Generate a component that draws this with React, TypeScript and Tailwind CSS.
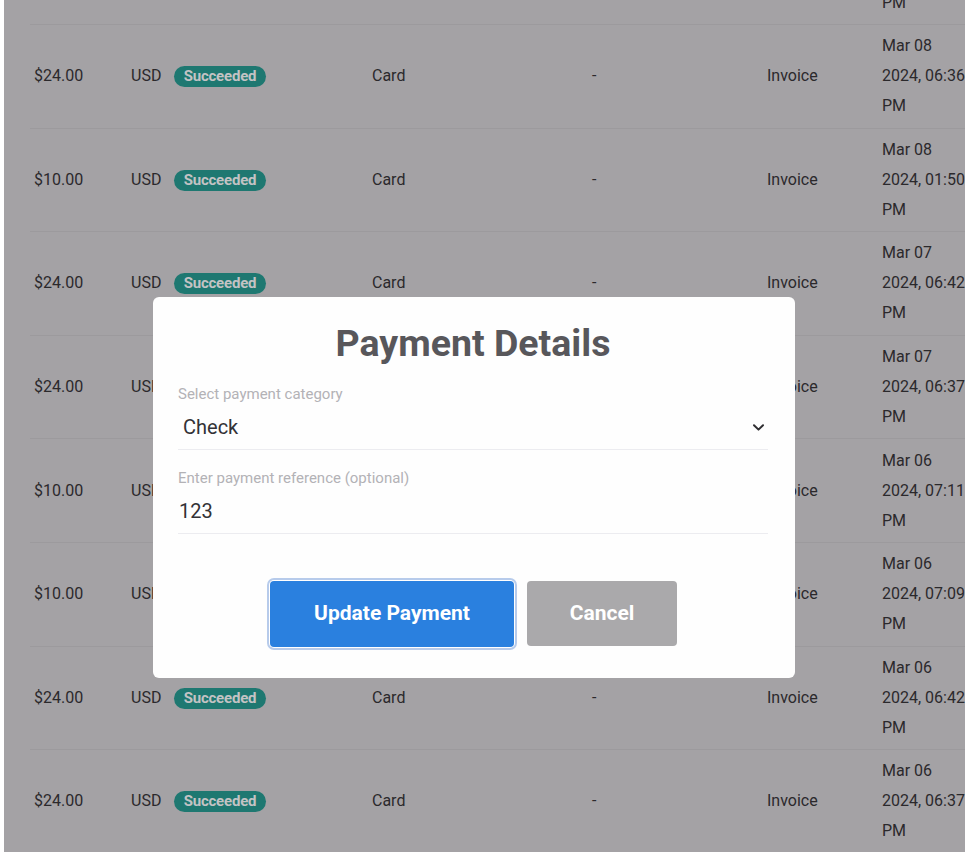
import React from "react";

type Row = { amount: string; date: string; time: string };

const rows: Row[] = [
  { amount: "$24.00", date: "Mar 08", time: "2024, 06:40" },
  { amount: "$24.00", date: "Mar 08", time: "2024, 06:36" },
  { amount: "$10.00", date: "Mar 08", time: "2024, 01:50" },
  { amount: "$24.00", date: "Mar 07", time: "2024, 06:42" },
  { amount: "$24.00", date: "Mar 07", time: "2024, 06:37" },
  { amount: "$10.00", date: "Mar 06", time: "2024, 07:11" },
  { amount: "$10.00", date: "Mar 06", time: "2024, 07:09" },
  { amount: "$24.00", date: "Mar 06", time: "2024, 06:42" },
  { amount: "$24.00", date: "Mar 06", time: "2024, 06:37" },
];

export default function App() {
  return (
    <div
      className="w-[970px] h-[855px] bg-white overflow-hidden"
      style={{ fontFamily: "Roboto, 'Liberation Sans', sans-serif" }}
    >
      <div className="relative ml-[4px] w-[961px] h-[852px] overflow-hidden bg-[#a4a2a5]">
        {/* dimmed table */}
        <div className="ml-[26px] mt-[-78.6px] text-[16px] text-[#2b292c]">
          {rows.map((r, i) => (
            <div
              key={i}
              className="flex items-center h-[103.6px] border-b border-[#9c9a9d] pl-[4px] whitespace-nowrap"
            >
              <div className="w-[97px]">{r.amount}</div>
              <div className="w-[43px]">USD</div>
              <div className="w-[198px]">
                <span className="inline-flex items-center justify-center w-[92px] h-[21px] rounded-full bg-[#1e7871] text-[15px] font-bold text-[#c3c3c4] leading-none tracking-[-0.2px]">
                  Succeeded
                </span>
              </div>
              <div className="w-[220px]">Card</div>
              <div className="w-[175px]">-</div>
              <div className="w-[115px]">Invoice</div>
              <div className="leading-[30px]">
                <div>{r.date}</div>
                <div>{r.time}</div>
                <div>PM</div>
              </div>
            </div>
          ))}
        </div>

        {/* modal */}
        <div className="absolute left-[149px] top-[297px] w-[642px] h-[381px] rounded-[6px] bg-[#fefefe] pt-[25px] pl-[25px] pr-[27px]">
          <h2 className="text-center text-[37.5px] leading-[42px] font-bold text-[#58575b]">
            Payment Details
          </h2>
          <div className="mt-[20px] border-b border-[#ececf0] pb-[8px]">
            <div className="text-[15px] leading-[20px] text-[#b3b2b6]">
              Select payment category
            </div>
            <div className="mt-[9px] flex items-center justify-between pl-[5px] pr-[3px]">
              <span className="text-[20px] leading-[28px] text-[#333236]">Check</span>
              <svg width="13" height="9" viewBox="0 0 13 9" fill="none">
                <path
                  d="M2 2.2 L6.5 6.6 L11 2.2"
                  stroke="#2f2e31"
                  strokeWidth="2"
                  strokeLinecap="round"
                  strokeLinejoin="round"
                />
              </svg>
            </div>
          </div>
          <div className="mt-[18px] border-b border-[#ececf0] pb-[8px]">
            <div className="text-[15px] leading-[20px] text-[#b3b2b6]">
              Enter payment reference (optional)
            </div>
            <div className="mt-[9px] pl-[1px] text-[20px] leading-[28px] text-[#333236]">
              123
            </div>
          </div>
          <div className="mt-[47px] flex justify-center gap-[13px] pl-[1px]">
            <button className="w-[244px] h-[66px] rounded-[4px] bg-[#2a80df] text-white text-[21px] font-bold ring-2 ring-[#b7cbeb] ring-offset-1">
              Update Payment
            </button>
            <button className="w-[150px] h-[65px] rounded-[4px] bg-[#aaa9ab] text-white text-[21px] font-bold">
              Cancel
            </button>
          </div>
        </div>
      </div>
    </div>
  );
}
